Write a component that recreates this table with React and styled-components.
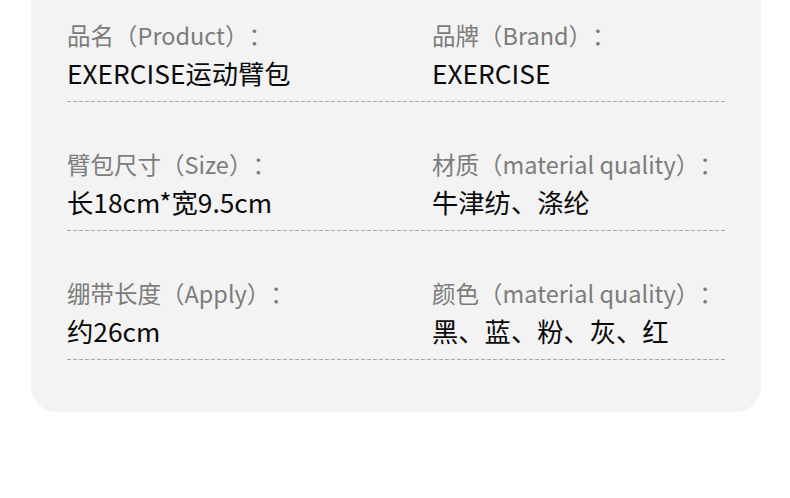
import React from "react";
import styled, { createGlobalStyle } from "styled-components";

const Global = createGlobalStyle`
  html, body {
    margin: 0;
    padding: 0;
    background: #ffffff;
  }
  body {
    font-family: "Noto Sans CJK SC", "Noto Sans", sans-serif;
    text-spacing-trim: space-all;
  }
`;

const Page = styled.div`
  width: 790px;
  height: 498px;
  background: #ffffff;
  padding-left: 31px;
  box-sizing: border-box;
`;

const Card = styled.div`
  width: 730px;
  box-sizing: border-box;
  background: #f3f3f3;
  border-radius: 0 0 26px 26px;
  padding: 19px 36px 52px 36px;
  display: flex;
  flex-direction: column;
  gap: 46px;
`;

const Row = styled.div`
  display: grid;
  grid-template-columns: 365px 1fr;
  background-image: linear-gradient(to right, #a9a9a9 4px, transparent 4px);
  background-size: 6px 1px;
  background-repeat: repeat-x;
  background-position: 0 100%;
  padding-bottom: 11px;
`;

const Cell = styled.div`
  display: flex;
  flex-direction: column;
  gap: 4px;
`;

const Label = styled.div`
  font-size: 23.5px;
  line-height: 32px;
  color: #7c7c7c;
  white-space: nowrap;
  text-spacing-trim: space-all;
`;

const Value = styled.div`
  font-size: 26.3px;
  line-height: 36px;
  color: #0a0a0a;
  white-space: nowrap;
  text-spacing-trim: space-all;
`;

const rows = [
  [
    { label: "品名（Product）：", value: "EXERCISE运动臂包" },
    { label: "品牌（Brand）：", value: "EXERCISE" },
  ],
  [
    { label: "臂包尺寸（Size）：", value: "长18cm*宽9.5cm" },
    { label: "材质（material quality）：", value: "牛津纺、涤纶" },
  ],
  [
    { label: "绷带长度（Apply）：", value: "约26cm" },
    { label: "颜色（material quality）：", value: "黑、蓝、粉、灰、红" },
  ],
];

export default function App() {
  return (
    <>
      <Global />
      <Page>
        <Card>
          {rows.map((r, i) => (
            <Row key={i}>
              {r.map((c, j) => (
                <Cell key={j}>
                  <Label>{c.label}</Label>
                  <Value>{c.value}</Value>
                </Cell>
              ))}
            </Row>
          ))}
        </Card>
      </Page>
    </>
  );
}
